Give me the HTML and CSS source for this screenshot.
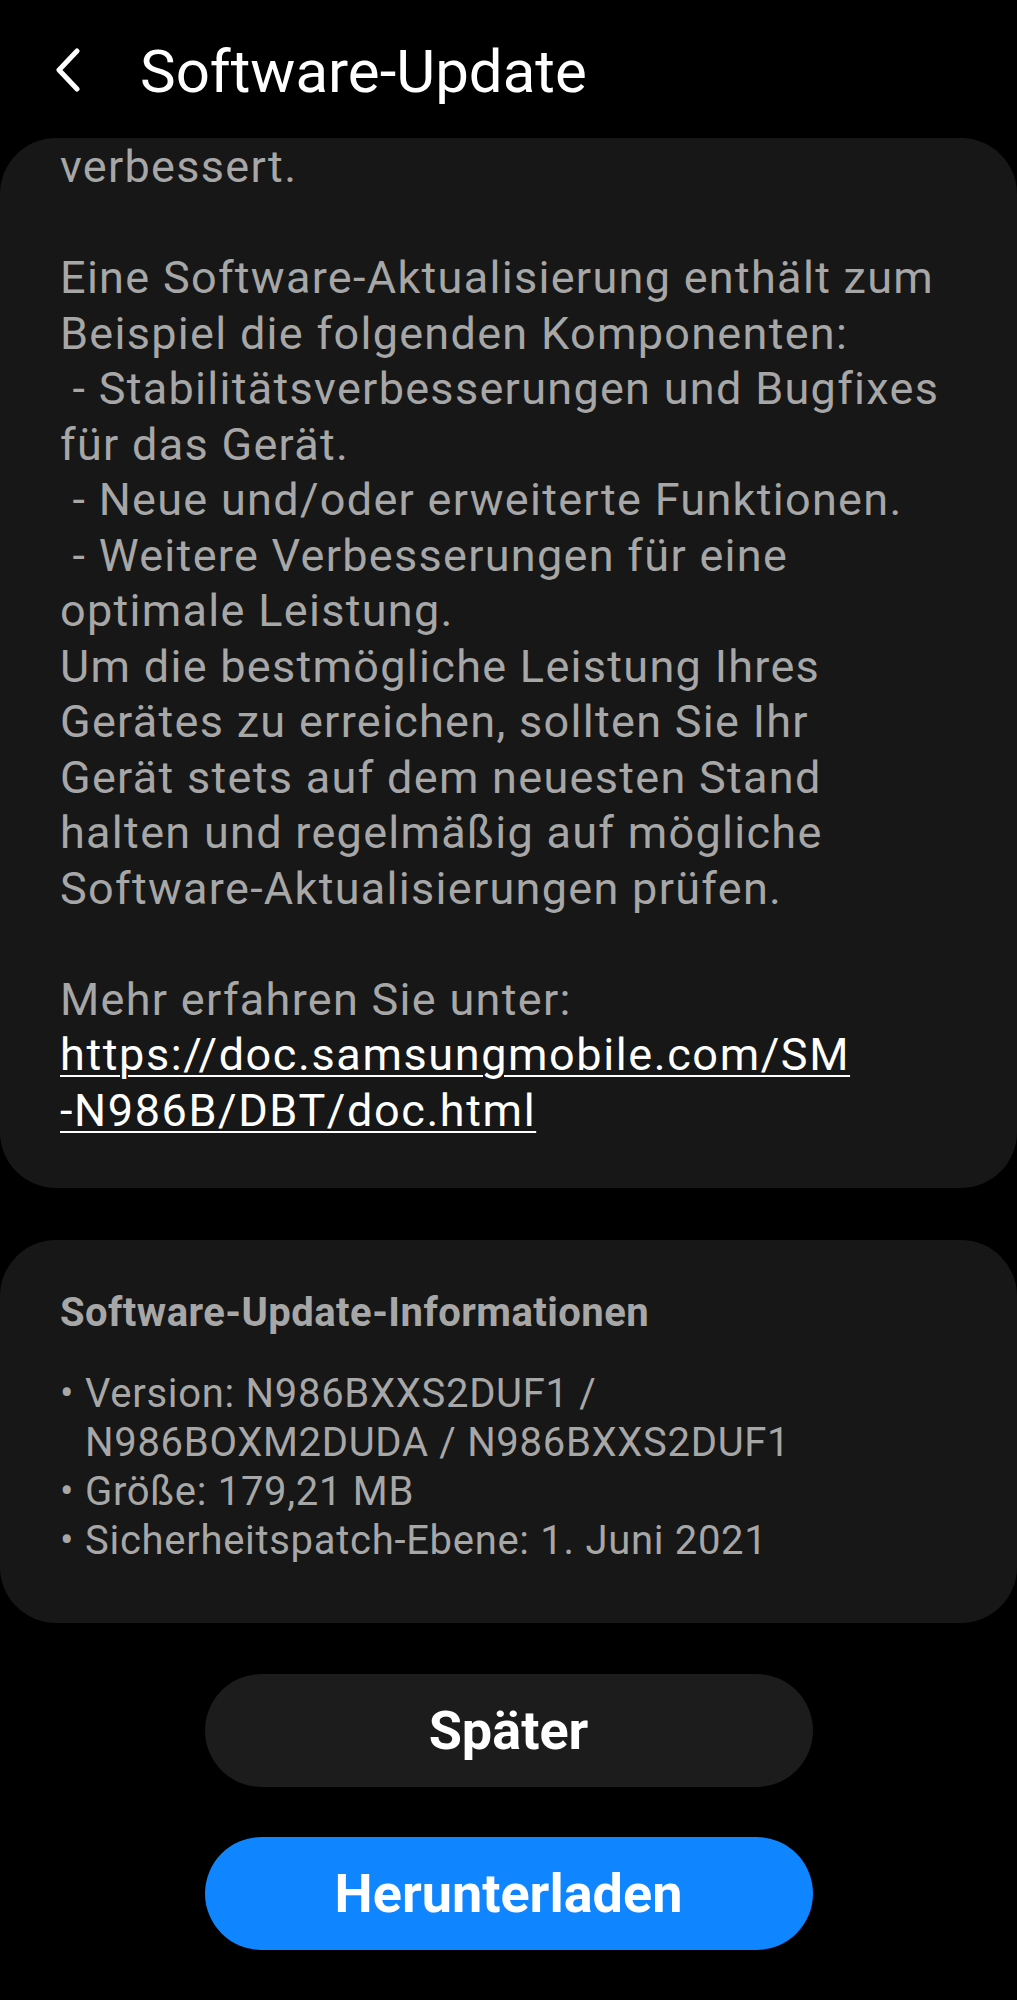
FILE: index.html
```html
<!DOCTYPE html>
<html lang="de">
<head>
<meta charset="utf-8">
<title>Software-Update</title>
<link rel="stylesheet" href="styles.css">
</head>
<body>
<div class="screen">
  <header class="appbar">
    <svg class="back" width="28" height="44" viewBox="0 0 28 44" aria-hidden="true">
      <path d="M23 3 L5 22 L23 41" fill="none" stroke="#ffffff" stroke-width="5" stroke-linecap="round" stroke-linejoin="round"/>
    </svg>
    <h1 class="title">Software-Update</h1>
  </header>

  <section class="card notes">
    <p class="line">verbessert.</p>
    <p class="line">&nbsp;</p>
    <p class="line">Eine Software-Aktualisierung enthält zum</p>
    <p class="line">Beispiel die folgenden Komponenten:</p>
    <p class="line">&nbsp;- Stabilitätsverbesserungen und Bugfixes</p>
    <p class="line">für das Gerät.</p>
    <p class="line">&nbsp;- Neue und/oder erweiterte Funktionen.</p>
    <p class="line">&nbsp;- Weitere Verbesserungen für eine</p>
    <p class="line">optimale Leistung.</p>
    <p class="line">Um die bestmögliche Leistung Ihres</p>
    <p class="line">Gerätes zu erreichen, sollten Sie Ihr</p>
    <p class="line">Gerät stets auf dem neuesten Stand</p>
    <p class="line">halten und regelmäßig auf mögliche</p>
    <p class="line">Software-Aktualisierungen prüfen.</p>
    <p class="line">&nbsp;</p>
    <p class="line">Mehr erfahren Sie unter:</p>
    <p class="line"><a class="link" href="#">https://doc.samsungmobile.com/SM</a></p>
    <p class="line"><a class="link" href="#">-N986B/DBT/doc.html</a></p>
  </section>

  <section class="card info">
    <h2 class="info-title">Software-Update-Informationen</h2>
    <ul class="info-list">
      <li class="info-item"><span class="bullet">•</span><span>Version: N986BXXS2DUF1 /<br>N986BOXM2DUDA / N986BXXS2DUF1</span></li>
      <li class="info-item"><span class="bullet">•</span><span>Größe: 179,21 MB</span></li>
      <li class="info-item"><span class="bullet">•</span><span>Sicherheitspatch-Ebene: 1. Juni 2021</span></li>
    </ul>
  </section>

  <div class="actions">
    <button class="btn btn-later" type="button">Später</button>
    <button class="btn btn-download" type="button">Herunterladen</button>
  </div>
</div>
</body>
</html>
```

FILE: styles.css
```css
* {
  box-sizing: border-box;
}

html, body {
  margin: 0;
  padding: 0;
  background: #000000;
}

body {
  font-family: Roboto, "Noto Sans", "Liberation Sans", sans-serif;
  color: #ffffff;
}

.screen {
  width: 1017px;
  min-height: 2000px;
  background: #000000;
  display: flex;
  flex-direction: column;
}

.appbar {
  height: 138px;
  display: flex;
  align-items: flex-start;
  padding-top: 42px;
  padding-left: 54px;
}

.back {
  margin-top: 6px;
  flex: none;
}

.title {
  margin: 0 0 0 58px;
  font-size: 60px;
  line-height: 60px;
  font-weight: 400;
  color: #ffffff;
}

.card {
  background: #171717;
  border-radius: 56px;
}

.notes {
  padding: 1px 60px 50px 60px;
  color: #a7a7a7;
  font-size: 45px;
  line-height: 55.5px;
  letter-spacing: 1.3px;
}

.line {
  margin: 0;
  white-space: nowrap;
}

.link {
  color: #ffffff;
  letter-spacing: 1.6px;
  text-decoration: underline;
  text-decoration-thickness: 2px;
  text-underline-offset: 5px;
}

.info {
  margin-top: 52px;
  height: 383px;
  padding: 48px 60px 0 60px;
  color: #a7a7a7;
}

.info-title {
  margin: 0;
  font-size: 40px;
  line-height: 49px;
  font-weight: 700;
  letter-spacing: 0.45px;
}

.info-list {
  list-style: none;
  margin: 32px 0 0 0;
  padding: 0;
  font-size: 40px;
  line-height: 49px;
  letter-spacing: 0.7px;
}

.info-item {
  display: flex;
}

.bullet {
  width: 25px;
  flex: none;
}

.actions {
  display: flex;
  flex-direction: column;
  align-items: center;
  gap: 50px;
  margin-top: 51px;
}

.btn {
  width: 608px;
  height: 113px;
  border: none;
  border-radius: 57px;
  font-family: Roboto, "Noto Sans", "Liberation Sans", sans-serif;
  font-size: 54px;
  font-weight: 700;
  color: #ffffff;
  padding: 0;
}

.btn-later {
  background: #1c1c1c;
}

.btn-download {
  background: #0f86ff;
}
```
